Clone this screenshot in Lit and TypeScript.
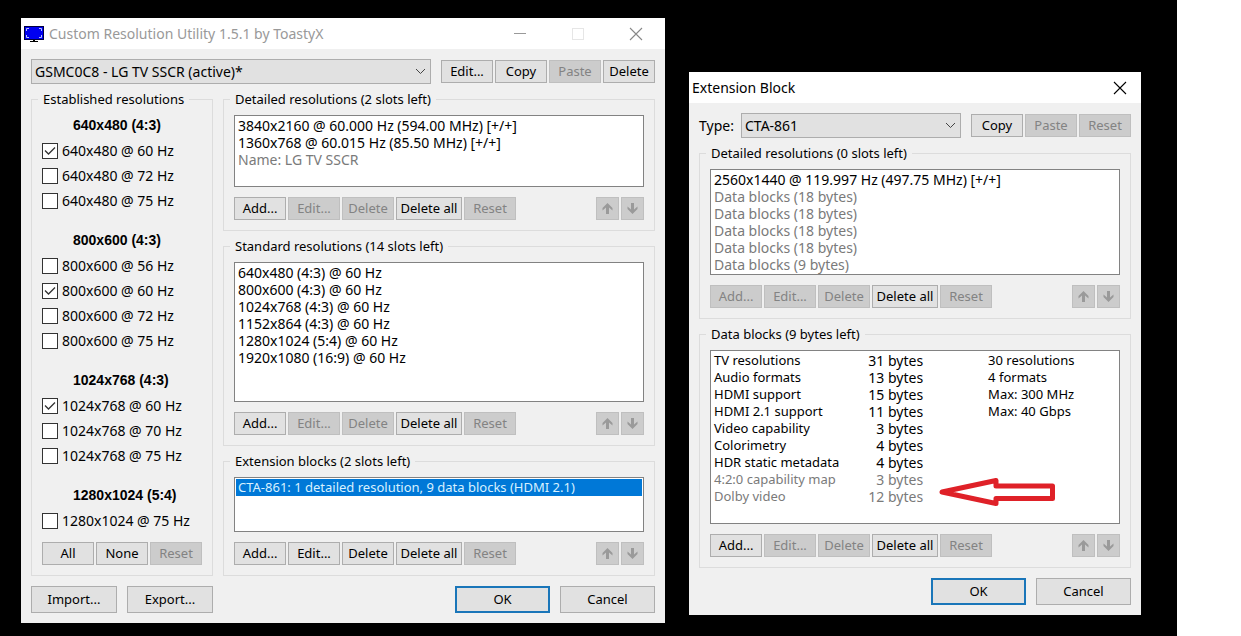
import { LitElement, html, css, svg, nothing } from "lit";
import type { TemplateResult } from "lit";
import { customElement } from "lit/decorators.js";
import { classMap } from "lit/directives/class-map.js";

interface ModeGroup {
  title: string;
  modes: [label: string, on: boolean][];
}

interface Row {
  text: string;
  muted?: boolean;
  selected?: boolean;
}

const MODES: ModeGroup[] = [
  {
    title: "640x480 (4:3)",
    modes: [
      ["640x480 @ 60 Hz", true],
      ["640x480 @ 72 Hz", false],
      ["640x480 @ 75 Hz", false],
    ],
  },
  {
    title: "800x600 (4:3)",
    modes: [
      ["800x600 @ 56 Hz", false],
      ["800x600 @ 60 Hz", true],
      ["800x600 @ 72 Hz", false],
      ["800x600 @ 75 Hz", false],
    ],
  },
  {
    title: "1024x768 (4:3)",
    modes: [
      ["1024x768 @ 60 Hz", true],
      ["1024x768 @ 70 Hz", false],
      ["1024x768 @ 75 Hz", false],
    ],
  },
  { title: "1280x1024 (5:4)", modes: [["1280x1024 @ 75 Hz", false]] },
];

const DETAILED: Row[] = [
  { text: "3840x2160 @ 60.000 Hz (594.00 MHz) [+/+]" },
  { text: "1360x768 @ 60.015 Hz (85.50 MHz) [+/+]" },
  { text: "Name: LG TV SSCR", muted: true },
];

const STANDARD: Row[] = [
  { text: "640x480 (4:3) @ 60 Hz" },
  { text: "800x600 (4:3) @ 60 Hz" },
  { text: "1024x768 (4:3) @ 60 Hz" },
  { text: "1152x864 (4:3) @ 60 Hz" },
  { text: "1280x1024 (5:4) @ 60 Hz" },
  { text: "1920x1080 (16:9) @ 60 Hz" },
];

const EXTENSIONS: Row[] = [
  { text: "CTA-861: 1 detailed resolution, 9 data blocks (HDMI 2.1)", selected: true },
];

const BLOCK_DETAILED: Row[] = [
  { text: "2560x1440 @ 119.997 Hz (497.75 MHz) [+/+]" },
  { text: "Data blocks (18 bytes)", muted: true },
  { text: "Data blocks (18 bytes)", muted: true },
  { text: "Data blocks (18 bytes)", muted: true },
  { text: "Data blocks (18 bytes)", muted: true },
  { text: "Data blocks (9 bytes)", muted: true },
];

const DATA_BLOCKS: [name: string, size: string, info: string, muted?: boolean][] = [
  ["TV resolutions", "31 bytes", "30 resolutions"],
  ["Audio formats", "13 bytes", "4 formats"],
  ["HDMI support", "15 bytes", "Max: 300 MHz"],
  ["HDMI 2.1 support", "11 bytes", "Max: 40 Gbps"],
  ["Video capability", "3 bytes", ""],
  ["Colorimetry", "4 bytes", ""],
  ["HDR static metadata", "4 bytes", ""],
  ["4:2:0 capability map", "3 bytes", "", true],
  ["Dolby video", "12 bytes", "", true],
];

const arrowShape = svg`<path d="M6.5 1 L11.5 6 V8.5 L8 5.5 V12 H5 V5.5 L1.5 8.5 V6 Z" fill="#9a9a9a"/>`;
const upArrow = html`<svg class="arrow" viewBox="0 0 13 13" aria-hidden="true">${arrowShape}</svg>`;
const downArrow = html`<svg class="arrow down" viewBox="0 0 13 13" aria-hidden="true">${arrowShape}</svg>`;

@customElement("app-root")
export class AppRoot extends LitElement {
  static styles = css`
    :host {
      display: block;
      min-height: 100vh;
      background: #fff;
      font: 14px/17px "Noto Sans", "Open Sans", sans-serif;
      color: #000;
    }
    * {
      box-sizing: border-box;
    }
    .desktop {
      display: flex;
      align-items: flex-start;
      gap: 24px;
      min-height: 100vh;
      margin-right: 64px;
      padding: 18px 36px 13px 21px;
      background: #000;
    }
    .window {
      min-width: 0;
      background: #f0f0f0;
    }
    .main {
      flex: 161 1 0;
    }
    .dialog {
      flex: 113 1 0;
      margin-top: 54px;
    }
    .titlebar {
      display: flex;
      align-items: center;
      height: 31px;
      padding-left: 3px;
      background: #fff;
    }
    .titlebar h1 {
      flex: 1;
      margin: 0;
      font-size: 14px;
      font-weight: 400;
    }
    .main h1 {
      margin-left: 5px;
      color: #999;
    }
    .caption {
      width: 58px;
      height: 31px;
      padding: 0;
      border: 0;
      background: none;
    }
    .caption svg {
      display: block;
      margin: auto;
    }
    .dialog .caption {
      width: 42px;
    }
    .logo {
      width: 20px;
      height: 16px;
    }
    .content {
      padding: 10px;
    }
    .toolbar,
    .actions,
    .footer {
      display: flex;
      align-items: center;
      gap: 2px;
    }
    .toolbar label {
      width: 40px;
    }
    .toolbar select {
      flex: 1;
      min-width: 0;
      height: 25px;
      margin-right: 8px;
      padding: 0 24px 0 3px;
      border: 1px solid #adadad;
      border-radius: 0;
      appearance: none;
      background: #e1e1e1
        url("data:image/svg+xml,%3Csvg xmlns='http://www.w3.org/2000/svg' width='11' height='7'%3E%3Cpath d='M1 1l4.5 4.5L10 1' fill='none' stroke='%23444'/%3E%3C/svg%3E")
        no-repeat right 4px center;
      color: #000;
      font: inherit;
    }
    .btn {
      width: 52px;
      height: 23px;
      padding: 0;
      border: 1px solid #adadad;
      background: #e1e1e1;
      color: #000;
      font: inherit;
      font-size: 13px;
      white-space: nowrap;
    }
    .btn:disabled {
      border-color: #bfbfbf;
      background: #ccc;
      color: #838383;
    }
    .btn.wide {
      width: 66px;
    }
    .btn.icon {
      display: grid;
      place-items: center;
      width: 23px;
    }
    .arrow {
      width: 13px;
      height: 13px;
    }
    .arrow.down {
      transform: rotate(180deg);
    }
    .spacer {
      flex: 1;
    }
    .columns {
      display: grid;
      grid-template-columns: 182px 1fr;
      gap: 10px;
    }
    .groups {
      display: flex;
      flex-direction: column;
      gap: 7px;
      min-width: 0;
    }
    .columns,
    .dialog .groups {
      margin-top: 7px;
    }
    fieldset {
      display: flex;
      flex-direction: column;
      min-width: 0;
      margin: 0;
      padding: 7px 10px 10px;
      border: 1px solid #dcdcdc;
    }
    legend {
      margin-left: -4px;
      padding: 0 5px;
      font-size: 13px;
    }
    .modes {
      display: flex;
      flex-direction: column;
      flex: 1;
      margin-top: -2px;
    }
    .mode-group + .mode-group {
      margin-top: 15px;
    }
    .modes h2 {
      margin: 0;
      padding-left: 31px;
      font: bold 14px/25px "Liberation Sans", Arial, sans-serif;
    }
    .mode {
      display: flex;
      align-items: center;
      gap: 4px;
      height: 25px;
    }
    .mode input {
      width: 16px;
      height: 16px;
      margin: 0;
      border: 1px solid #333;
      appearance: none;
      background: #fff;
    }
    .mode input:checked {
      background: #fff
        url("data:image/svg+xml,%3Csvg xmlns='http://www.w3.org/2000/svg' width='14' height='14'%3E%3Cpath d='M2 6.5l3.5 3.5L12 3.5' fill='none' stroke='%23333' stroke-width='1.3'/%3E%3C/svg%3E");
    }
    .modes .actions {
      margin-top: auto;
    }
    .list {
      position: relative;
      margin: 0 0 10px;
      padding: 1px;
      border: 1px solid #828282;
      background: #fff;
      list-style: none;
    }
    .h3 {
      min-height: 72px;
    }
    .h6 {
      min-height: 106px;
    }
    .h8 {
      min-height: 140px;
    }
    .h2 {
      min-height: 55px;
    }
    .h9 {
      min-height: 174px;
    }
    .list li {
      padding-left: 2px;
      white-space: nowrap;
    }
    .muted {
      color: #7a7a7a;
    }
    .list .selected {
      background: #0078d7;
      color: #d8f1ff;
      font-size: 13px;
    }
    table {
      width: 100%;
      border-collapse: collapse;
      table-layout: fixed;
    }
    td {
      height: 17px;
      padding: 0;
      white-space: nowrap;
    }
    .name {
      width: 36%;
      padding-left: 2px;
      font-size: 13px;
    }
    .size {
      width: 16%;
      text-align: right;
    }
    .info {
      padding-left: 65px;
      font-size: 13px;
    }
    .pointer {
      position: absolute;
      top: 126px;
      left: 228px;
      width: 117px;
      height: 30px;
    }
    .footer {
      gap: 10px;
      margin-top: 10px;
    }
    .footer .btn {
      width: 95px;
      height: 27px;
    }
    .footer .file {
      width: 86px;
    }
    .footer .default {
      border: 2px solid #1a76b9;
    }
  `;

  private button(label: string, enabled = true, extra = "") {
    return html`<button class="btn ${extra}" type="button" ?disabled=${!enabled}>${label}</button>`;
  }

  private listActions([add, edit, del]: boolean[]) {
    return html`<div class="actions">
      ${this.button("Add...", add)} ${this.button("Edit...", edit)} ${this.button("Delete", del)}
      ${this.button("Delete all", true, "wide")} ${this.button("Reset", false)}
      <span class="spacer"></span>
      <button class="btn icon" type="button" disabled aria-label="Move up">${upArrow}</button>
      <button class="btn icon" type="button" disabled aria-label="Move down">${downArrow}</button>
    </div>`;
  }

  private list(rows: Row[], size: string) {
    return html`<ul class="list ${size}" role="listbox">
      ${rows.map(
        (r) => html`<li
          role="option"
          aria-selected=${r.selected ? "true" : "false"}
          class=${classMap({ muted: !!r.muted, selected: !!r.selected })}
        >${r.text}</li>`,
      )}
    </ul>`;
  }

  private group(title: string, body: TemplateResult, enabled: boolean[]) {
    return html`<fieldset>
      <legend>${title}</legend>
      ${body} ${this.listActions(enabled)}
    </fieldset>`;
  }

  private closeIcon(color: string) {
    return html`<svg width="14" height="14" viewBox="0 0 14 14" aria-hidden="true">
      <path d="M1 1 L13 13 M13 1 L1 13" stroke=${color} stroke-width="1.1" />
    </svg>`;
  }

  private mainWindow() {
    return html`<section class="window main">
      <header class="titlebar">
        <svg class="logo" viewBox="0 0 20 16" aria-hidden="true">
          <rect width="20" height="14" fill="#000040" />
          <rect x="1" y="1" width="18" height="12" fill="#0000f0" />
          <path
            d="M2.5 5 V2.5 H5 M15 2.5 H17.500 V5 M17.500 9 V11.500 H15 M5 11.500 H2.500 V9"
            fill="none"
            stroke="#b8c4ff"
          />
          <path d="M9 14 H11 V15 H14 V16 H6 V15 H9 Z" fill="#000" />
        </svg>
        <h1>Custom Resolution Utility 1.5.1 by ToastyX</h1>
        <button class="caption" type="button" aria-label="Minimize">
          <svg width="12" height="12" viewBox="0 0 12 12"><path d="M0 5.500 H12" stroke="#999" /></svg>
        </button>
        <button class="caption" type="button" disabled aria-label="Maximize">
          <svg width="12" height="12" viewBox="0 0 12 12">
            <rect x="0.500" y="0.500" width="11" height="11" fill="none" stroke="#e6e6e6" />
          </svg>
        </button>
        <button class="caption" type="button" aria-label="Close">${this.closeIcon("#888")}</button>
      </header>
      <div class="content">
        <div class="toolbar">
          <select aria-label="Display">
            <option>GSMC0C8 - LG TV SSCR (active)*</option>
          </select>
          ${this.button("Edit...")} ${this.button("Copy")} ${this.button("Paste", false)}
          ${this.button("Delete")}
        </div>
        <div class="columns">
          <fieldset>
            <legend>Established resolutions</legend>
            <div class="modes">
              ${MODES.map(
                (g) => html`<div class="mode-group">
                  <h2>${g.title}</h2>
                  ${g.modes.map(
                    ([label, on]) => html`<label class="mode"
                      ><input type="checkbox" .checked=${on} />${label}</label
                    >`,
                  )}
                </div>`,
              )}
              <div class="actions">
                ${this.button("All")} ${this.button("None")} ${this.button("Reset", false)}
              </div>
            </div>
          </fieldset>
          <div class="groups">
            ${this.group("Detailed resolutions (2 slots left)", this.list(DETAILED, "h3"), [true, false, false])}
            ${this.group("Standard resolutions (14 slots left)", this.list(STANDARD, "h8"), [true, false, false])}
            ${this.group("Extension blocks (2 slots left)", this.list(EXTENSIONS, "h2"), [true, true, true])}
          </div>
        </div>
        <div class="footer">
          ${this.button("Import...", true, "file")} ${this.button("Export...", true, "file")}
          <span class="spacer"></span>
          ${this.button("OK", true, "default")} ${this.button("Cancel")}
        </div>
      </div>
    </section>`;
  }

  private dataBlocks() {
    return html`<div class="list h9">
      <table>
        <tbody>
          ${DATA_BLOCKS.map(
            ([name, size, info, muted]) => html`<tr class=${muted ? "muted" : nothing}>
              <td class="name">${name}</td>
              <td class="size">${size}</td>
              <td class="info">${info}</td>
            </tr>`,
          )}
        </tbody>
      </table>
      <svg class="pointer" viewBox="0 0 117 30" aria-hidden="true">
        <path
          d="M3 15 L57 3.500 V9 H113.500 V21.500 H57 V26.500 Z"
          fill="#fff"
          stroke="#df2128"
          stroke-width="5"
          stroke-linejoin="round"
        />
      </svg>
    </div>`;
  }

  private extensionWindow() {
    return html`<section class="window dialog">
      <header class="titlebar">
        <h1>Extension Block</h1>
        <button class="caption" type="button" aria-label="Close">${this.closeIcon("#000")}</button>
      </header>
      <div class="content">
        <div class="toolbar">
          <label for="block-type">Type:</label>
          <select id="block-type">
            <option>CTA-861</option>
          </select>
          ${this.button("Copy")} ${this.button("Paste", false)} ${this.button("Reset", false)}
        </div>
        <div class="groups">
          ${this.group("Detailed resolutions (0 slots left)", this.list(BLOCK_DETAILED, "h6"), [false, false, false])}
          ${this.group("Data blocks (9 bytes left)", this.dataBlocks(), [true, false, false])}
        </div>
        <div class="footer">
          <span class="spacer"></span>
          ${this.button("OK", true, "default")} ${this.button("Cancel")}
        </div>
      </div>
    </section>`;
  }

  render() {
    return html`<main class="desktop">${this.mainWindow()} ${this.extensionWindow()}</main>`;
  }
}
